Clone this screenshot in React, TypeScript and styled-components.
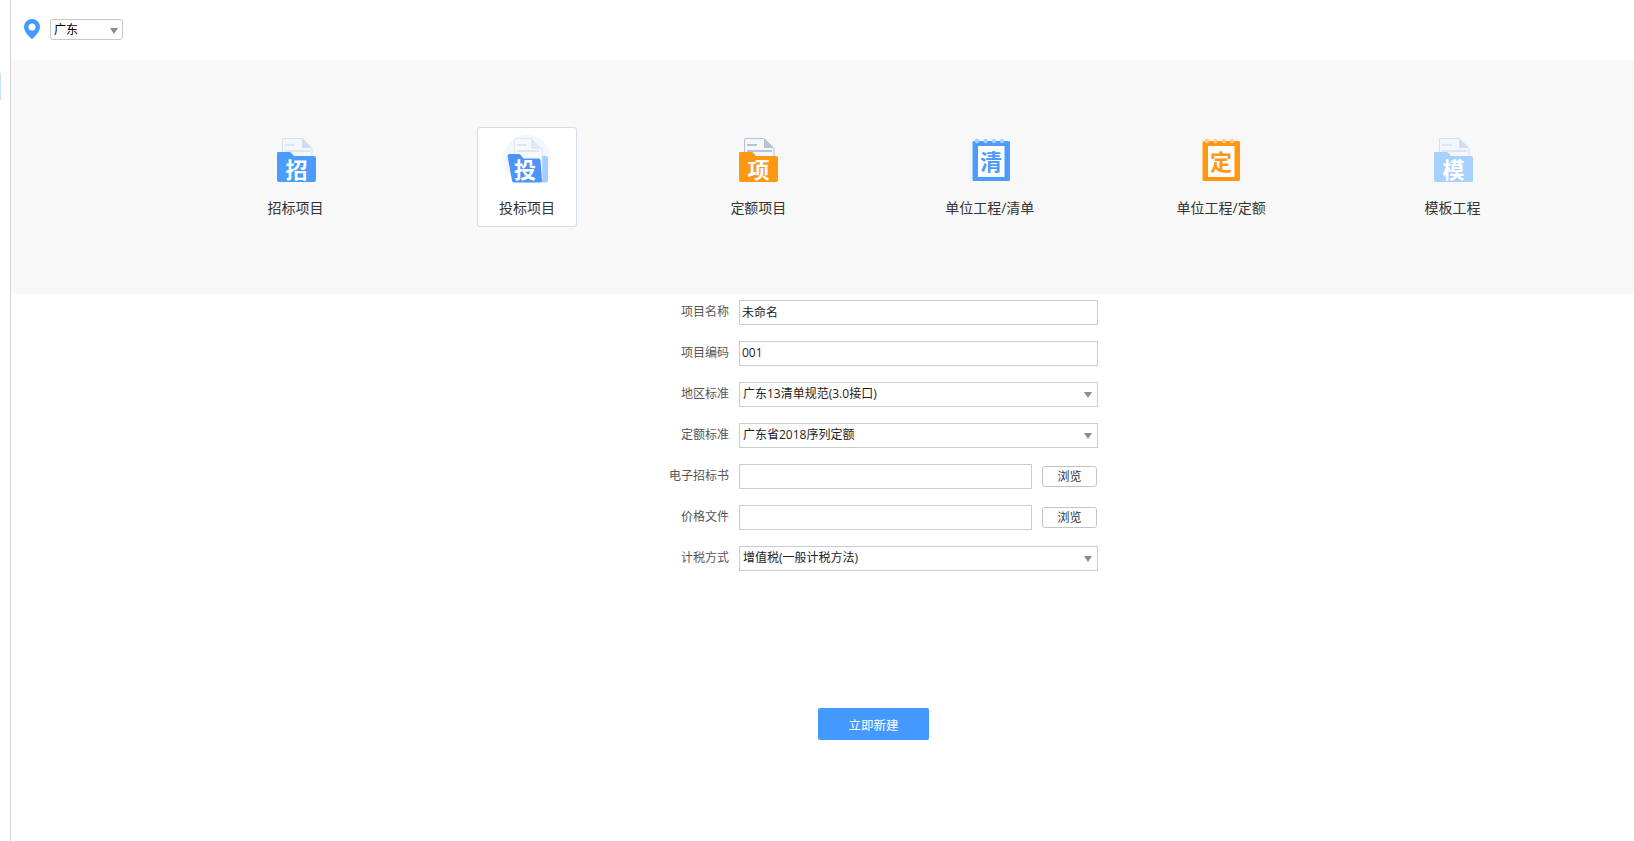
import React from "react";
import styled, { createGlobalStyle } from "styled-components";

const UI_FONT = `"Open Sans", "Noto Sans CJK SC", "Liberation Sans", sans-serif`;

const GlobalStyle = createGlobalStyle`
  html, body { margin: 0; padding: 0; background: #fff; }
  body { font-family: ${UI_FONT}; font-size: 12px; color: #333; }
  * { box-sizing: border-box; }
`;

const Page = styled.div`
  display: flex;
  width: 1634px;
  height: 841px;
  overflow: hidden;
`;

const Rail = styled.aside`
  flex: none;
  width: 11px;
  padding-top: 73px;
  border-right: 1px solid #d4d4d4;
`;

const RailMark = styled.div`
  width: 1px;
  height: 27px;
  background: #c4e0ff;
`;

const Main = styled.main`
  flex: 1;
  display: flex;
  flex-direction: column;
  min-width: 0;
`;

const TopBar = styled.header`
  height: 60px;
  display: flex;
  align-items: flex-start;
  gap: 10px;
  padding: 19px 0 0 13px;
`;

const RegionSelect = styled.div`
  width: 73px;
  height: 21px;
  display: flex;
  align-items: center;
  justify-content: space-between;
  padding: 0 4px 0 3px;
  border: 1px solid #c8c8c8;
  border-radius: 3px;
  color: #000;
  line-height: 19px;
`;

const Band = styled.section`
  height: 234px;
  background: #f8f8f8;
  display: flex;
  align-items: flex-start;
  padding: 67px 0 0 234.6px;
  gap: 131.4px;
`;

const TypeCard = styled.div<{ $active?: boolean }>`
  flex: none;
  width: 100px;
  height: 100px;
  display: flex;
  flex-direction: column;
  align-items: center;
  padding-top: 7px;
  border: 1px solid ${(p) => (p.$active ? "#d5dce3" : "transparent")};
  border-radius: 3px;
  background: ${(p) => (p.$active ? "#fff" : "transparent")};
`;

const IconSlot = styled.div<{ $shift?: number }>`
  display: flex;
  width: 48px;
  height: 48px;
  margin-left: ${(p) => (p.$shift ?? 0) * 2}px;
  svg { overflow: visible; }
`;

const TypeName = styled.div`
  margin-top: 15px;
  font-size: 14px;
  line-height: 20px;
  color: #333;
  white-space: nowrap;
`;

const Form = styled.form`
  display: flex;
  flex-direction: column;
  gap: 16px;
  margin: 6px 0 0 0;
  padding-left: 614px;
`;

const Row = styled.div`
  display: flex;
  align-items: center;
  height: 25px;
`;

const Label = styled.label`
  flex: none;
  width: 104px;
  margin-right: 10px;
  padding-bottom: 2px;
  text-align: right;
  color: #555;
  line-height: 23px;
`;

const TextInput = styled.input<{ $short?: boolean }>`
  width: ${(p) => (p.$short ? "293px" : "359px")};
  height: 25px;
  padding: 0 2px 2px;
  border: 1px solid #cccccc;
  border-radius: 0;
  outline: none;
  font: 12px ${UI_FONT};
  color: #222;
  background: #fff;
`;

const SelectBox = styled.div`
  width: 359px;
  height: 25px;
  display: flex;
  align-items: center;
  justify-content: space-between;
  padding: 0 5px 2px 3px;
  border: 1px solid #cccccc;
  color: #222;
  line-height: 21px;
`;

const Arrow = styled.span`
  width: 0;
  height: 0;
  margin-top: 2px;
  border-left: 4px solid transparent;
  border-right: 4px solid transparent;
  border-top: 6px solid #8c8c8c;
`;

const BrowseButton = styled.button`
  flex: none;
  width: 55px;
  height: 21px;
  margin-left: 10px;
  padding: 0 0 2px;
  border: 1px solid #c4c4c4;
  border-radius: 3px;
  background: #fff;
  font: 12px ${UI_FONT};
  color: #333;
`;

const SubmitWrap = styled.div`
  padding: 137px 0 0 807px;
`;

const SubmitButton = styled.button`
  width: 111px;
  height: 32px;
  padding: 0;
  border: none;
  border-radius: 2px;
  background: #4499ff;
  color: #fff;
  font: 12.5px ${UI_FONT};
`;

const GlyphText = styled.text`
  font-family: "Noto Sans CJK SC", sans-serif;
  font-weight: 700;
  text-anchor: middle;
`;

type FolderProps = {
  glyph: string;
  color: string;
  line: string;
  paper: string;
  fold: string;
};

function FolderIcon({ glyph, color, line, paper, fold }: FolderProps) {
  return (
    <svg width="48" height="48" viewBox="0 0 48 48" aria-hidden="true">
      <path d="M13 3.500h18l10 10v23H11.500V5a1.500 1.500 0 0 1 1.500-1.500z" fill={paper} stroke={fold} strokeWidth="1" />
      <path d="M31 3l10 10H31z" fill={fold} />
      <path d="M14 10h10M14 16h25" stroke={line} strokeWidth="2" />
      <path
        d="M7 17h11.5a2 2 0 0 1 1.500.700l3 3.300h20a2 2 0 0 1 2 2V45a2 2 0 0 1-2 2H8a2 2 0 0 1-2-2V18a1 1 0 0 1 1-1z"
        fill={color}
      />
      <GlyphText x="25.500" y="42.500" fontSize="22" fill="#fff">
        {glyph}
      </GlyphText>
    </svg>
  );
}

function BidFolderIcon({ glyph }: { glyph: string }) {
  return (
    <svg width="48" height="48" viewBox="0 0 48 48" aria-hidden="true">
      <circle cx="24" cy="24" r="24" fill="#f3f6fa" />
      <path d="M38 20.500l5 .5a2 2 0 0 1 2 2V45.500a2 2 0 0 1-2 2h-5z" fill="#a3cdff" />
      <path d="M13 3.500h15l11 11v30H11.500V5a1.500 1.500 0 0 1 1.500-1.500z" fill="#f6f9fd" stroke="#dfe8f3" strokeWidth="1" />
      <path d="M28 3l11 11H28z" fill="#dfe8f3" />
      <path d="M14 10h10M14 16h22" stroke="#dce6f2" strokeWidth="2" />
      <path
        d="M6.500 19h9.500a2 2 0 0 1 1.500.700l3 3.800h15a2 2 0 0 1 2 1.900l1.500 20.100a2 2 0 0 1-2 2H11a2 2 0 0 1-2-1.700L4.600 21.300A2 2 0 0 1 6.500 19z"
        fill="#4c94f8"
      />
      <GlyphText x="22" y="43" fontSize="22" fill="#fff">
        {glyph}
      </GlyphText>
    </svg>
  );
}

function NotebookIcon({ glyph, color, ring }: { glyph: string; color: string; ring: string }) {
  return (
    <svg width="48" height="48" viewBox="0 0 48 48" aria-hidden="true">
      <rect x="5.500" y="6" width="37.500" height="40" rx="1.500" fill={color} />
      <rect x="11" y="11" width="26.500" height="31" fill="#fff" />
      {[10, 18.500, 27, 35].map((x) => (
        <circle key={x} cx={x} cy="6" r="2.200" fill={ring} />
      ))}
      <GlyphText x="24" y="35" fontSize="22" fill={color}>
        {glyph}
      </GlyphText>
    </svg>
  );
}

const blueFile = { line: "#dce6f2", paper: "#f3f7fc", fold: "#cfdff2" };

const formRows = [
  { label: "项目名称", kind: "text", value: "未命名" },
  { label: "项目编码", kind: "text", value: "001" },
  { label: "地区标准", kind: "select", value: "广东13清单规范(3.0接口)" },
  { label: "定额标准", kind: "select", value: "广东省2018序列定额" },
  { label: "电子招标书", kind: "file", value: "" },
  { label: "价格文件", kind: "file", value: "" },
  { label: "计税方式", kind: "select", value: "增值税(一般计税方法)" },
];

export default function App() {
  return (
    <Page>
      <GlobalStyle />
      <Rail>
        <RailMark />
      </Rail>
      <Main>
        <TopBar>
          <svg width="16" height="20" viewBox="0 0 16 20" aria-hidden="true">
            <path
              fillRule="evenodd"
              d="M8 0a8 8 0 0 1 8 8c0 4.400-4.600 9.300-8 12C4.600 17.300 0 12.400 0 8a8 8 0 0 1 8-8zm0 4.500a3.500 3.500 0 1 0 0 7 3.500 3.500 0 0 0 0-7z"
              fill="#4499ff"
            />
          </svg>
          <RegionSelect>
            广东
            <Arrow />
          </RegionSelect>
        </TopBar>
        <Band>
          <TypeCard>
            <IconSlot $shift={-1}>
              <FolderIcon glyph="招" color="#4c9bff" {...blueFile} />
            </IconSlot>
            <TypeName>招标项目</TypeName>
          </TypeCard>
          <TypeCard $active>
            <IconSlot>
              <BidFolderIcon glyph="投" />
            </IconSlot>
            <TypeName>投标项目</TypeName>
          </TypeCard>
          <TypeCard>
            <IconSlot $shift={-1}>
              <FolderIcon glyph="项" color="#ff9713" line="#b6c3d6" paper="#f5f7fa" fold="#b6c3d6" />
            </IconSlot>
            <TypeName>定额项目</TypeName>
          </TypeCard>
          <TypeCard>
            <IconSlot $shift={1}>
              <NotebookIcon glyph="清" color="#4c9bff" ring="#a8cfff" />
            </IconSlot>
            <TypeName>单位工程/清单</TypeName>
          </TypeCard>
          <TypeCard>
            <IconSlot>
              <NotebookIcon glyph="定" color="#ff9713" ring="#ffcb8c" />
            </IconSlot>
            <TypeName>单位工程/定额</TypeName>
          </TypeCard>
          <TypeCard>
            <IconSlot $shift={-1}>
              <FolderIcon glyph="模" color="#a6d0ff" {...blueFile} />
            </IconSlot>
            <TypeName>模板工程</TypeName>
          </TypeCard>
        </Band>
        <Form onSubmit={(e) => e.preventDefault()}>
          {formRows.map((row) => (
            <Row key={row.label}>
              <Label>{row.label}</Label>
              {row.kind === "text" && <TextInput defaultValue={row.value} />}
              {row.kind === "select" && (
                <SelectBox>
                  {row.value}
                  <Arrow />
                </SelectBox>
              )}
              {row.kind === "file" && (
                <>
                  <TextInput $short />
                  <BrowseButton type="button">浏览</BrowseButton>
                </>
              )}
            </Row>
          ))}
        </Form>
        <SubmitWrap>
          <SubmitButton type="submit">立即新建</SubmitButton>
        </SubmitWrap>
      </Main>
    </Page>
  );
}
